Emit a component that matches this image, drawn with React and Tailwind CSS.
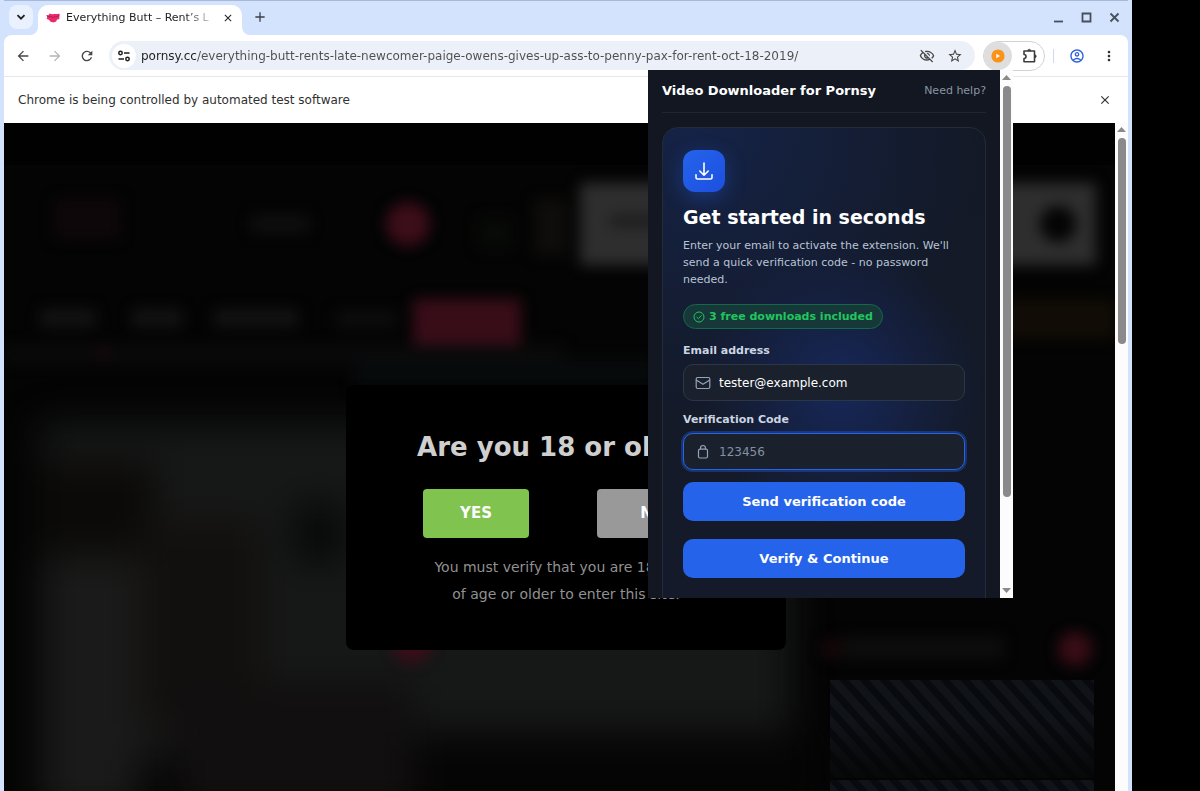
import {
  MdOutlineVisibilityOff,
  MdStarBorder,
  MdMoreVert,
  MdOutlineAccountCircle,
  MdArrowBack,
  MdArrowForward,
  MdRefresh,
  MdClose,
  MdAdd
} from "react-icons/md";

function ScrollArrow({ down = false }) {
  return (
    <svg viewBox="0 0 9 5" className="w-[9px] h-[5px] shrink-0" aria-hidden="true">
      <path d={down ? "M0 0h9L4.500 5z" : "M0 5h9L4.500 0z"} fill="#8a8a8a" />
    </svg>
  );
}

function TabStrip() {
  return (
    <div className="h-[35px] flex items-start pl-[5px] pr-1 bg-[#d3e3fd] border-t border-[#a8b9d8]">
      <button aria-label="Search tabs" className="mt-1 w-6 h-6 rounded-lg bg-[#eaf1fe] flex items-center justify-center text-[#1f1f1f]">
        <svg viewBox="0 0 10 10" className="w-[10px] h-[10px]" fill="none" stroke="currentColor" strokeWidth="1.800">
          <path d="M1.500 3.200 5 6.700l3.500-3.500" />
        </svg>
      </button>

      <div className="relative ml-[5px] mt-1 h-[30px] w-[204px] rounded-t-[10px] bg-white flex items-center pl-2 pr-1 pb-[5px]">
        <svg viewBox="0 0 8 8" className="absolute -left-2 bottom-0 w-2 h-2" aria-hidden="true">
          <path d="M8 0v8H0a8 8 0 0 0 8-8z" fill="#fff" />
        </svg>
        <svg viewBox="0 0 8 8" className="absolute -right-2 bottom-0 w-2 h-2" aria-hidden="true">
          <path d="M0 0v8h8A8 8 0 0 1 0 0z" fill="#fff" />
        </svg>
        <svg viewBox="0 0 14 10" className="w-[14px] h-[10px] shrink-0" aria-hidden="true">
          <path d="M.2 2 2.500 2.300 3.600.6 6 1.300 8 1.100 11 1 13.700.8 13.200 6.200 11 6.600 10.200 8.600 7.500 9.600 4.500 8.800 3 6.800.6 6 1.300 4z" fill="#ea2a6c" />
          <path d="M1 3.200l3 .4 3 .8 3-.8 3-.8" fill="none" stroke="#8f1f4a" strokeWidth=".7" />
        </svg>
        <span className="ml-[6px] flex-1 whitespace-nowrap text-[11px] leading-5 text-[#1f1f1f] [mask-image:linear-gradient(to_right,#000_120px,transparent_150px)]">
          Everything Butt – Rent’s L
        </span>
        <button aria-label="Close tab" className="w-5 h-5 flex items-center justify-center text-[#1f1f1f]">
          <MdClose className="w-3 h-3" />
        </button>
      </div>

      <button aria-label="New tab" className="ml-[6px] mt-1 w-6 h-6 flex items-center justify-center text-[#3c4043]">
        <MdAdd className="w-4 h-4" />
      </button>

      <div className="ml-auto h-8 flex items-center gap-2 text-[#474f5c]">
        {[
          ["Minimize", <path key="a" d="M1 9.500h9" />],
          ["Maximize", <path key="b" d="M1.500 1.500h8v8h-8z" />],
          ["Close", <path key="c" d="M1.500 1.500l8 8m0-8l-8 8" />]
        ].map(([label, shape]) => (
          <button key={label} aria-label={label} className="w-5 h-5 flex items-center justify-center">
            <svg viewBox="0 0 11 11" className="w-[11px] h-[11px]" fill="none" stroke="currentColor" strokeWidth="1.800">
              {shape}
            </svg>
          </button>
        ))}
      </div>
    </div>
  );
}

function Toolbar() {
  return (
    <div className="h-[41px] flex items-center rounded-t-lg bg-white pl-[11px] pr-[11px]">
      <div className="flex items-center gap-3 text-[#474747]">
        <button aria-label="Back" className="w-5 h-5"><MdArrowBack className="w-4 h-4" /></button>
        <button aria-label="Forward" className="w-5 h-5 text-[#b4b4b4]"><MdArrowForward className="w-4 h-4" /></button>
        <button aria-label="Reload" className="w-5 h-5"><MdRefresh className="w-4 h-4" /></button>
      </div>

      <div className="ml-[10px] flex-1 h-[29px] rounded-full bg-[#ecf1f9] flex items-center pl-[3px] pr-3 text-[#474747]">
        <button aria-label="Site information" className="w-6 h-6 rounded-full bg-white flex items-center justify-center text-[#1f1f1f]">
          <svg viewBox="0 0 12 12" className="w-3 h-3" fill="none" stroke="currentColor" strokeWidth="1.500">
            <circle cx="2.500" cy="3" r="1.700" />
            <path d="M6 3h5.500M.5 9H6" />
            <circle cx="9.500" cy="9" r="1.700" />
          </svg>
        </button>
        <input
          aria-label="Address"
          readOnly
          defaultValue="pornsy.cc/everything-butt-rents-late-newcomer-paige-owens-gives-up-ass-to-penny-pax-for-rent-oct-18-2019/"
          className="ml-[5px] flex-1 min-w-0 text-[12px] outline-none text-transparent bg-clip-text bg-linear-to-r from-[#1f1f1f] from-[56px] to-[#4e4e4e] to-[56px]"
        />
        <button aria-label="Third-party cookies blocked" className="ml-2"><MdOutlineVisibilityOff className="w-4 h-4" /></button>
        <button aria-label="Bookmark" className="ml-3"><MdStarBorder className="w-4 h-4" /></button>
      </div>

      <div className="ml-2 h-[30px] w-[62px] rounded-full border border-[#d2d2d2] flex items-center">
        <button aria-label="Video Downloader" className="w-7 h-7 rounded-full bg-[#dedede] flex items-center justify-center">
          <svg viewBox="0 0 14 14" className="w-[14px] h-[14px]">
            <circle cx="7" cy="7" r="6.600" fill="#fb9318" />
            <path d="M5.300 4.800v4.400L9 7z" fill="#fff" />
          </svg>
        </button>
        <button aria-label="Extensions" className="ml-[10px] text-[#3c3c3c]">
          <svg viewBox="0 0 16 16" className="w-4 h-4" fill="none" stroke="currentColor" strokeWidth="1.600" strokeLinejoin="round">
            <path d="M2 3h10.500v10.800H2v-3.300a2 2 0 0 0 0-4z" />
            <path d="M5.600 2.800a1.600 1.600 0 0 1 3.200 0zM12.700 6.700a1.600 1.600 0 0 1 0 3.200z" fill="currentColor" strokeWidth=".6" />
          </svg>
        </button>
      </div>
      <span className="ml-2 w-px h-[14px] bg-[#c6dafc]" />
      <button aria-label="Profile" className="ml-[15px] text-[#2b5fd9]"><MdOutlineAccountCircle className="w-4 h-4" /></button>
      <button aria-label="Menu" className="ml-4 text-[#303030]"><MdMoreVert className="w-4 h-4" /></button>
    </div>
  );
}

// Dimmed and blurred page behind the age gate
function Backdrop() {
  return (
    <svg
      viewBox="0 0 1124 668"
      preserveAspectRatio="xMinYMin slice"
      className="absolute inset-0 w-full h-full"
      aria-hidden="true"
    >
      <defs>
        <filter id="soft" x="-50%" y="-50%" width="200%" height="200%" colorInterpolationFilters="sRGB">
          <feGaussianBlur stdDeviation="7" />
        </filter>
        <filter id="softer" x="-50%" y="-50%" width="200%" height="200%" colorInterpolationFilters="sRGB">
          <feGaussianBlur stdDeviation="18" />
        </filter>
        <pattern id="stripes" width="15" height="15" patternUnits="userSpaceOnUse" patternTransform="rotate(-42)">
          <rect width="15" height="15" fill="#080a0f" />
          <rect width="8" height="15" fill="#101318" />
        </pattern>
        <linearGradient id="fade" x1="0" y1="0" x2="0" y2="1">
          <stop offset=".4" stopColor="#050505" stopOpacity="0" />
          <stop offset="1" stopColor="#050505" stopOpacity=".8" />
        </linearGradient>
      </defs>
      <rect width="1124" height="668" fill="#040404" />
      <rect width="1124" height="42" fill="#010101" />
      <g filter="url(#soft)">
        <rect x="576" y="60" width="516" height="82" fill="#2e2e2e" />
        <rect x="606" y="92" width="50" height="12" fill="#1c1c1c" />
        <circle cx="1054" cy="101" r="18" fill="#040404" />
        <rect x="530" y="76" width="34" height="56" fill="#0e0d0b" />
        <rect x="474" y="94" width="34" height="32" fill="#070a06" />
        <circle cx="404" cy="101" r="22" fill="#3c0e19" />
        <rect x="50" y="76" width="66" height="40" fill="#0e0709" />
        <rect x="247" y="92" width="58" height="18" fill="#0f0f0f" />
        <rect x="409" y="176" width="108" height="50" fill="#380d18" />
        <rect x="36" y="186" width="56" height="18" fill="#131313" />
        <rect x="128" y="186" width="50" height="18" fill="#131313" />
        <rect x="210" y="186" width="84" height="18" fill="#131313" />
        <rect x="332" y="188" width="60" height="16" fill="#0d0d0d" />
        <rect x="1000" y="176" width="111" height="40" fill="#110d06" />
        <rect x="0" y="222" width="560" height="18" fill="#0a0a0a" />
        <circle cx="98" cy="230" r="7" fill="#1c080d" />
        <rect x="350" y="236" width="300" height="30" fill="#070a0b" />
      </g>
      <g filter="url(#softer)">
        <rect x="36" y="300" width="752" height="336" fill="#161717" />
        <rect x="36" y="440" width="100" height="250" fill="#1a1a1a" />
        <rect x="40" y="340" width="110" height="90" fill="#0b0a08" />
        <rect x="136" y="400" width="120" height="200" fill="#12100e" />
        <rect x="290" y="380" width="50" height="60" fill="#070909" />
        <rect x="170" y="560" width="240" height="130" fill="#110f0f" />
        <rect x="410" y="610" width="400" height="80" fill="#060505" />
      </g>
      <g filter="url(#soft)">
        <circle cx="408" cy="521" r="19" fill="#3a0d18" />
        <rect x="840" y="514" width="160" height="22" fill="#0e0d0d" />
        <circle cx="828" cy="526" r="11" fill="#16070a" />
        <circle cx="1071" cy="526" r="17" fill="#380d16" />
      </g>
      <rect x="826" y="557" width="264" height="98" fill="url(#stripes)" />
      <rect x="826" y="557" width="264" height="98" fill="url(#fade)" />
      <rect x="826" y="657" width="264" height="11" fill="url(#stripes)" />
    </svg>
  );
}

function AgeGate() {
  return (
    <section className="relative mx-auto mt-[262px] w-[440px] h-[265px] rounded-lg bg-black pt-[41px] text-center">
      <h2 className="text-[26px] leading-[42px] font-bold text-[#cfcfcf]">Are you 18 or older?</h2>
      <div className="mt-[21px] flex justify-center gap-[68px]">
        <button className="w-[106px] h-[49px] rounded bg-[#80c34f] text-[15px] font-bold text-white">YES</button>
        <button className="w-[112px] h-[49px] rounded bg-[#999999] text-[15px] font-bold text-white">NO</button>
      </div>
      <p className="mt-4 text-[14px] leading-[27px] text-[#919191]">
        You must verify that you are 18 years
        <br />
        of age or older to enter this site.
      </p>
    </section>
  );
}

function Field({ id, label, icon, focused = false, ...props }) {
  return (
    <div>
      <label htmlFor={id} className="block text-[11px] leading-[18px] font-bold text-[#cbd5e1]">{label}</label>
      <div
        className={`mt-1 h-[37px] flex items-center gap-2 rounded-[10px] border bg-[#1a212d] px-[11px] text-[#94a3b8] ${
          focused ? "border-[#2563eb] shadow-[0_0_0_2px_rgba(37,99,235,0.35)]" : "border-[#2b3747]"
        }`}
      >
        {icon}
        <input id={id} className="flex-1 min-w-0 bg-transparent text-[12px] text-white placeholder:text-[#8390a3] outline-none" {...props} />
      </div>
    </div>
  );
}

function Popup() {
  return (
    <aside className="absolute right-[115px] top-[70px] z-20 w-[365px] h-[528px] flex overflow-hidden bg-[#121722] text-white">
      <div className="flex-1 px-[14px] overflow-hidden">
        <header className="h-[43px] flex items-center justify-between border-b border-[#1f2532]">
          <h1 className="text-[13px] font-bold">Video Downloader for Pornsy</h1>
          <a href="#help" className="text-[11px] text-[#8a94a6]">Need help?</a>
        </header>

        <section className="mt-[14px] h-[500px] rounded-2xl border border-[#232b3a] bg-[radial-gradient(circle_at_55%_52%,#17275a_0%,transparent_45%),radial-gradient(circle_at_10%_0%,#152347_0%,transparent_50%),linear-gradient(#131926,#141a29)] px-5 pt-[22px]">
          <div className="w-[42px] h-[42px] rounded-xl bg-linear-to-br from-[#2563eb] to-[#1d4fe0] shadow-[0_6px_20px_rgba(37,99,235,0.35)] flex items-center justify-center">
            <svg viewBox="0 0 20 20" className="w-5 h-5" fill="none" stroke="#fff" strokeWidth="1.600" strokeLinecap="round" strokeLinejoin="round">
              <path d="M10 2v12M5.800 10l4.200 4.200L14.200 10M2 13.800v2.700a1.500 1.500 0 0 0 1.500 1.500h13a1.500 1.500 0 0 0 1.500-1.500v-2.700" />
            </svg>
          </div>
          <h2 className="mt-3 text-[19px] leading-[26px] font-bold">Get started in seconds</h2>
          <p className="mt-[7px] text-[11px] leading-[17px] text-[#b9c4d4]">
            Enter your email to activate the extension. We'll
            <br />
            send a quick verification code - no password
            <br />
            needed.
          </p>
          <div className="mt-4 flex w-fit items-center gap-1 h-[25px] rounded-full border border-[#15694a] bg-[#163839] px-[9px] text-[#22c55e]">
            <svg viewBox="0 0 12 12" className="w-3 h-3" fill="none" stroke="currentColor">
              <circle cx="6" cy="6" r="5" />
              <path d="M3.900 6.200 5.400 7.700 8.200 4.600" strokeLinecap="round" strokeLinejoin="round" />
            </svg>
            <span className="text-[11px] leading-4 font-bold">3 free downloads included</span>
          </div>

          <form className="mt-[13px] flex flex-col gap-[10px]" onSubmit={(e) => e.preventDefault()}>
            <Field
              id="email"
              label="Email address"
              type="email"
              defaultValue="tester@example.com"
              icon={
                <svg viewBox="0 0 16 16" className="w-4 h-4 shrink-0" fill="none" stroke="currentColor" strokeWidth="1.200" strokeLinecap="round" strokeLinejoin="round">
                  <rect x="1.200" y="2.500" width="13.600" height="11" rx="1.500" />
                  <path d="M1.600 5.200 8 9.200l6.400-4" />
                </svg>
              }
            />
            <Field
              id="code"
              label="Verification Code"
              placeholder="123456"
              focused
              icon={
                <svg viewBox="0 0 16 16" className="w-4 h-4 shrink-0" fill="none" stroke="currentColor" strokeWidth="1.200" strokeLinejoin="round">
                  <rect x="3.500" y="5.200" width="9" height="8.800" rx="1.500" />
                  <path d="M5.500 5V4a2.500 2.500 0 0 1 5 0v1" />
                </svg>
              }
            />
            <button className="mt-[2px] h-[39px] shrink-0 rounded-[10px] bg-[#2563eb] text-[13px] font-bold">Send verification code</button>
            <button className="mt-2 h-[39px] shrink-0 rounded-[10px] bg-[#2563eb] text-[13px] font-bold">Verify &amp; Continue</button>
          </form>
        </section>
      </div>
      <div className="w-[13px] flex flex-col items-center bg-[#fcfcfc] py-[5px]" aria-hidden="true">
        <ScrollArrow />
        <div className="mt-[6px] mb-auto w-2 h-[411px] rounded-full bg-[#8a8a8a]" />
        <ScrollArrow down />
      </div>
    </aside>
  );
}

export default function App() {
  return (
    <div className="h-screen overflow-hidden bg-black pr-[68px] font-['DejaVu_Sans',sans-serif]">
      <div className="relative h-full flex flex-col border-x-4 border-[#d3e3fd]">
        <TabStrip />
        <div className="bg-[#d3e3fd]">
          <Toolbar />
        </div>
        <div className="h-[47px] flex items-center justify-between border-t border-[#e6e8eb] bg-white pl-[14px] pr-4 text-[#303030]">
          <p className="text-[12px]">Chrome is being controlled by automated test software</p>
          <button aria-label="Dismiss"><MdClose className="w-[14px] h-[14px]" /></button>
        </div>
        <main className="relative flex-1 overflow-hidden bg-black">
          <Backdrop />
          <AgeGate />
          <div className="absolute right-0 inset-y-0 w-[13px] flex flex-col items-center bg-[#fcfcfc] pt-1" aria-hidden="true">
            <ScrollArrow />
            <div className="mt-[6px] w-2 h-[206px] rounded-full bg-[#8a8a8a]" />
          </div>
        </main>
        <Popup />
      </div>
    </div>
  );
}
